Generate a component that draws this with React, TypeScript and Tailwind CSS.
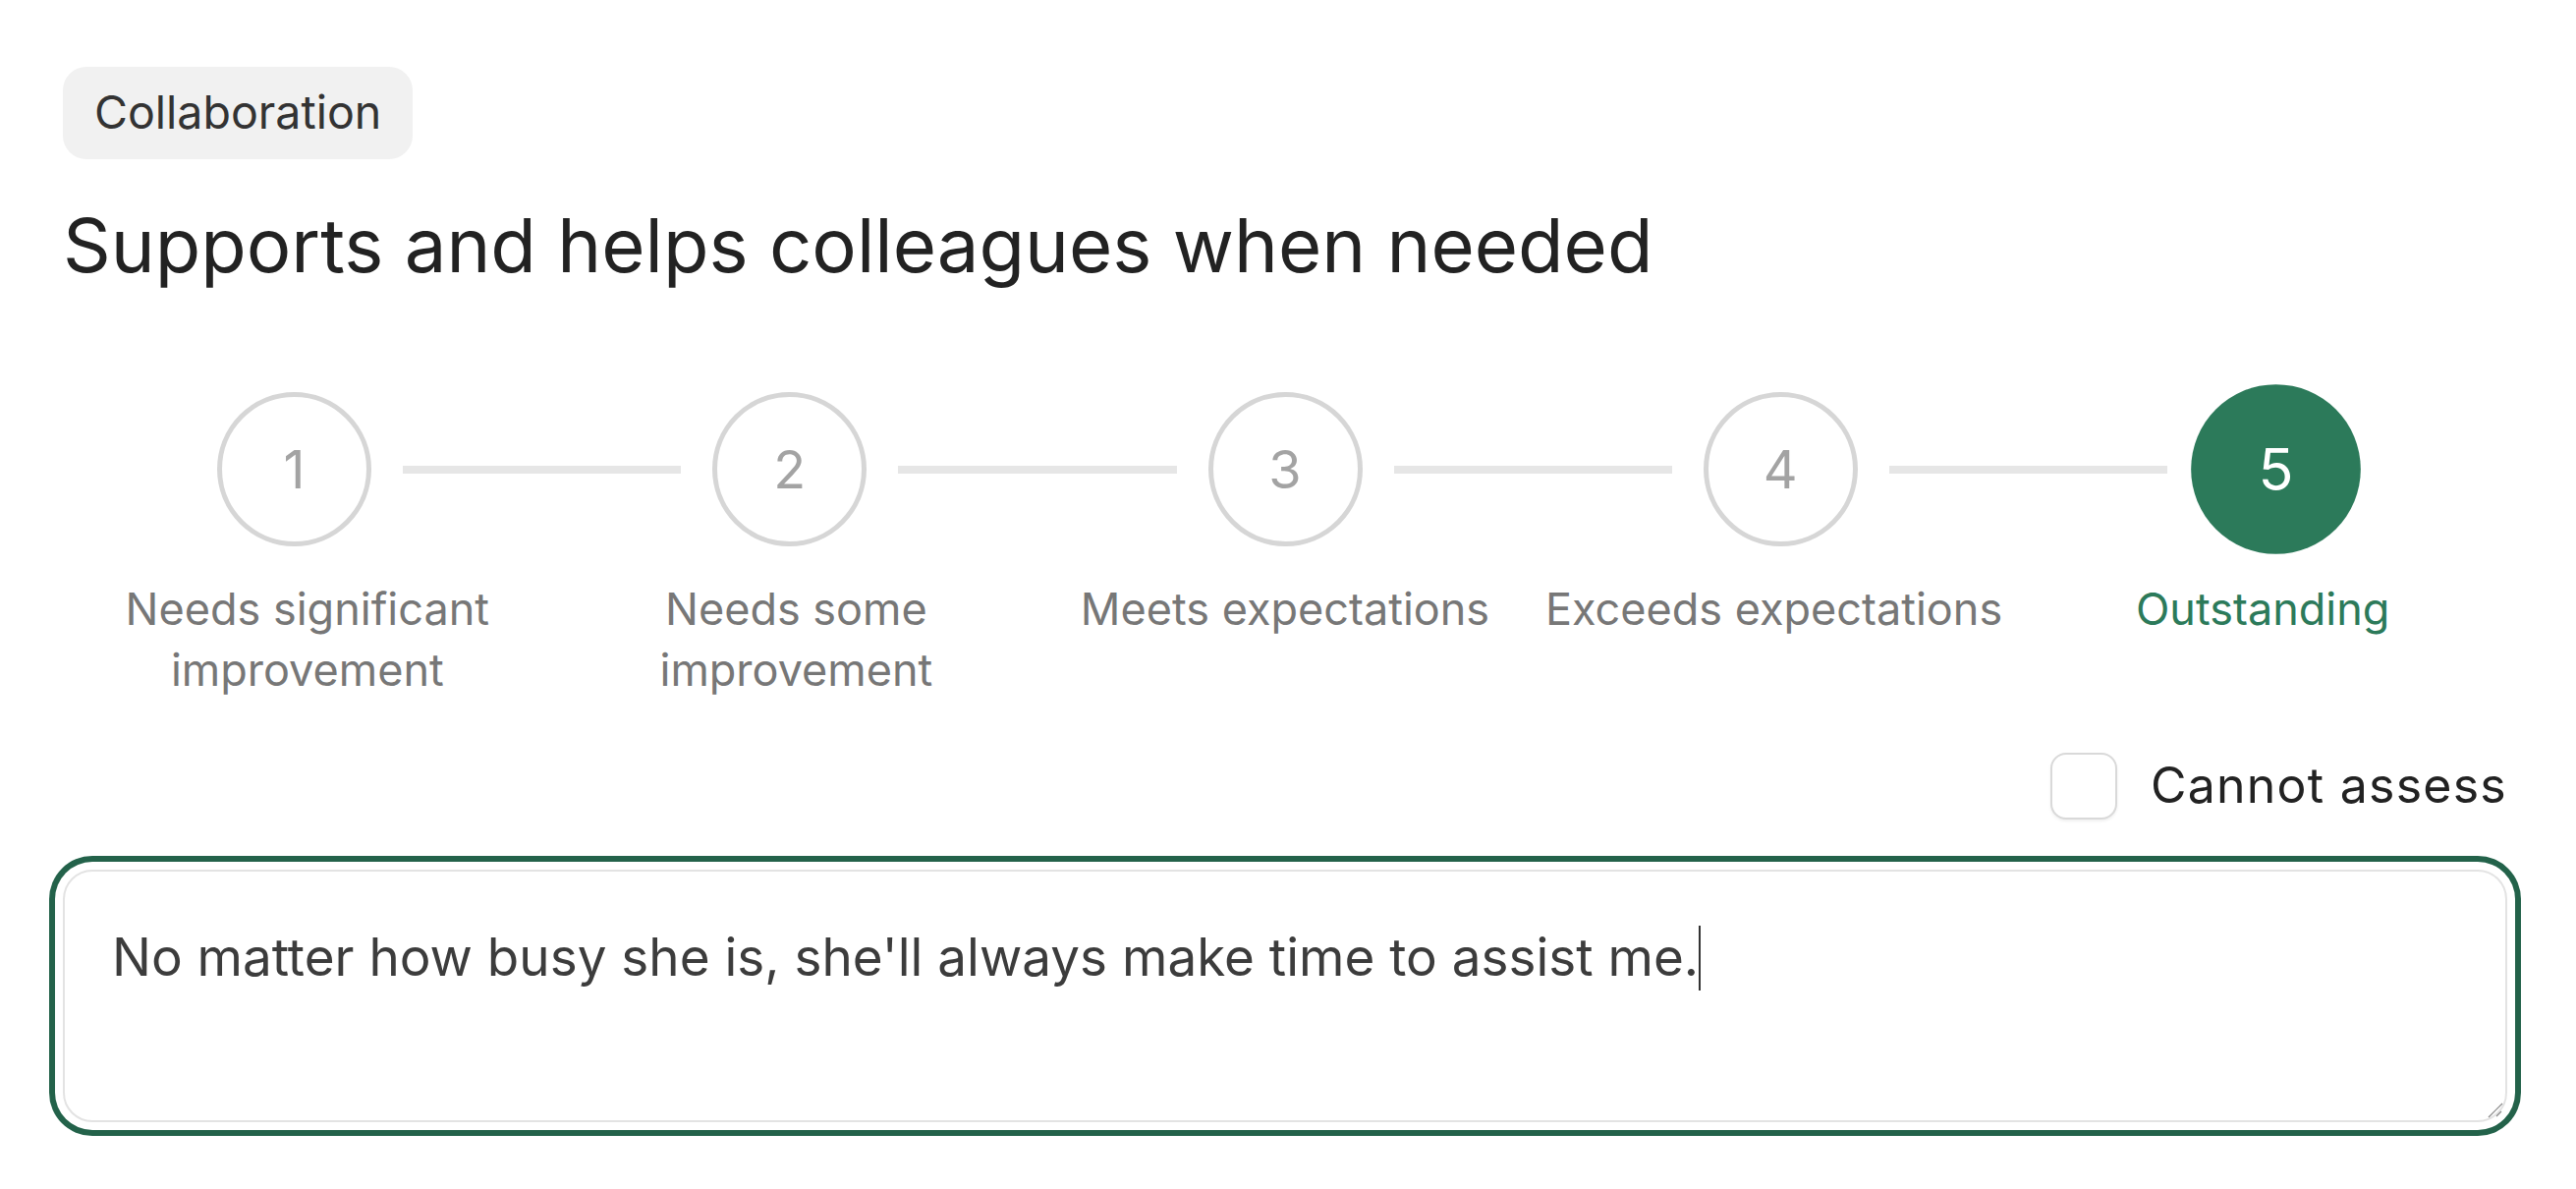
const steps = [
  { value: 1, label: "Needs significant improvement" },
  { value: 2, label: "Needs some improvement" },
  { value: 3, label: "Meets expectations" },
  { value: 4, label: "Exceeds expectations" },
  { value: 5, label: "Outstanding" },
];

const selected = 5;

function StepCircle({ value }: { value: number }) {
  const active = value === selected;
  return (
    <div
      className={
        active
          ? "flex h-[157px] w-[157px] shrink-0 scale-110 items-center justify-center rounded-full bg-[#2c7a5a] text-[54px] text-white"
          : "flex h-[157px] w-[157px] shrink-0 items-center justify-center rounded-full border-[5px] border-[#d6d6d6] text-[54px] text-[#a3a3a3]"
      }
    >
      {value}
    </div>
  );
}

export default function App() {
  return (
    <div className="min-h-screen bg-white pl-16 pr-[70px] pt-[68px] font-['Inter',sans-serif]">
      <div className="inline-flex h-[94px] items-center rounded-[24px] bg-[#f1f1f1] px-8 text-[46.5px] text-[#333]">
        Collaboration
      </div>

      <h1 className="mt-[49px] text-[76px] leading-none text-[#222]">
        Supports and helps colleagues when needed
      </h1>

      {/* rating scale */}
      <div className="mt-[112px] flex items-center px-[157px]">
        {steps.map((step, i) => (
          <div key={step.value} className={i === 0 ? "flex items-center" : "flex flex-1 items-center"}>
            {i > 0 && <div className="mx-8 h-2 flex-1 bg-[#e6e6e6]" />}
            <StepCircle value={step.value} />
          </div>
        ))}
      </div>
      <div className="mt-[33px] grid grid-cols-5">
        {steps.map((step) => (
          <div
            key={step.value}
            className={
              step.value === selected
                ? "text-center text-[45px] leading-[62px] text-[#2c7a5a]"
                : "text-center text-[45px] leading-[62px] text-[#777]"
            }
          >
            {step.label}
          </div>
        ))}
      </div>

      <div className="mt-[49px] flex justify-end">
        <label className="flex items-center gap-[34px] text-[50px] tracking-[0.025em] text-[#222]">
          <span className="h-[68px] w-[68px] rounded-[16px] border-2 border-[#d9d9d9] bg-white shadow-[0_2px_3px_rgba(0,0,0,0.06)]" />
          Cannot assess
        </label>
      </div>

      <div className="relative mt-[48px] h-[257px] rounded-[30px] border-2 border-[#e3e3e3] bg-white px-12 pt-12 text-[53px] leading-[1.5] text-[#3c3c3c] shadow-[0_0_0_8px_#fff,0_0_0_14px_#23624a]">
        No matter how busy she is, she'll always make time to assist me.
        <span className="inline-block h-[66px] w-[2px] bg-[#333] align-[-15px]" />
        <svg className="absolute bottom-[2px] right-[2px] h-4 w-4" viewBox="0 0 16 16">
          <line x1="1" y1="15" x2="15" y2="1" stroke="#8a8a8a" strokeWidth="1.2" />
          <line x1="9" y1="14" x2="14" y2="9" stroke="#8a8a8a" strokeWidth="1.2" />
        </svg>
      </div>
    </div>
  );
}
